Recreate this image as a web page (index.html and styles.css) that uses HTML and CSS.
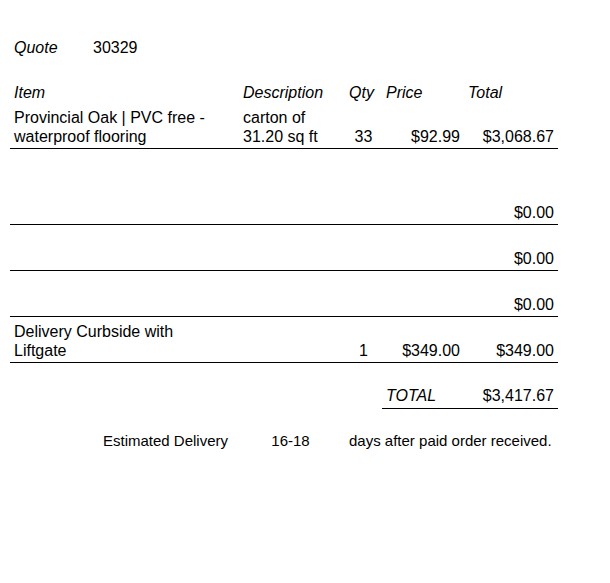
FILE: index.html
```html
<!DOCTYPE html>
<html>
<head>
<meta charset="utf-8">
<link rel="stylesheet" href="styles.css">
</head>
<body>
<div class="sheet">
  <div class="quote-row">
    <span class="quote-label">Quote</span>
    <span class="quote-num">30329</span>
  </div>
  <div class="grid">
    <div class="cell hd">Item</div>
    <div class="cell hd">Description</div>
    <div class="cell hd">Qty</div>
    <div class="cell hd">Price</div>
    <div class="cell hd">Total</div>

    <div class="cell b"><span>Provincial Oak | PVC free -</span><span>waterproof flooring</span></div>
    <div class="cell b"><span>carton of</span><span>31.20 sq ft</span></div>
    <div class="cell b c">33</div>
    <div class="cell b r">$92.99</div>
    <div class="cell b r">$3,068.67</div>

    <div class="cell b"></div>
    <div class="cell b"></div>
    <div class="cell b"></div>
    <div class="cell b"></div>
    <div class="cell b r">$0.00</div>

    <div class="cell b"></div>
    <div class="cell b"></div>
    <div class="cell b"></div>
    <div class="cell b"></div>
    <div class="cell b r">$0.00</div>

    <div class="cell b"></div>
    <div class="cell b"></div>
    <div class="cell b"></div>
    <div class="cell b"></div>
    <div class="cell b r">$0.00</div>

    <div class="cell b"><span>Delivery Curbside with</span><span>Liftgate</span></div>
    <div class="cell b"></div>
    <div class="cell b c">1</div>
    <div class="cell b r">$349.00</div>
    <div class="cell b r">$349.00</div>

    <div class="cell"></div>
    <div class="cell"></div>
    <div class="cell"></div>
    <div class="cell b hd tot">TOTAL</div>
    <div class="cell b r tot">$3,417.67</div>

    <div class="cell r est est-label">Estimated Delivery</div>
    <div class="cell c est est-days">16-18</div>
    <div class="cell est est-text">days after paid order received.</div>
  </div>
</div>
</body>
</html>
```

FILE: styles.css
```css
html, body {
  margin: 0;
  padding: 0;
  background: #ffffff;
}

body {
  font-family: "Liberation Sans", Arial, sans-serif;
  font-size: 16px;
  line-height: 19px;
  color: #000000;
}

.sheet {
  width: 610px;
  height: 583px;
  padding-top: 38px;
  box-sizing: border-box;
}

.quote-row {
  display: flex;
  padding-left: 14px;
  height: 19px;
}

.quote-label {
  font-style: italic;
  width: 79px;
}

.grid {
  display: grid;
  margin-left: 10px;
  width: 548px;
  grid-template-columns: 229px 106px 37px 82px 94px;
  grid-template-rows: 48px 44px 76px 46px 46px 46px 46px 44px;
}

.cell {
  display: flex;
  flex-direction: column;
  justify-content: flex-end;
  padding: 0 4px 2px 4px;
  white-space: nowrap;
  border-bottom: 1px solid transparent;
}

.cell.b {
  border-bottom-color: #000000;
}

.hd {
  font-style: italic;
}

.r {
  align-items: flex-end;
}

.c {
  align-items: center;
}

.tot {
  padding-bottom: 3px;
}

.est {
  font-size: 15px;
}

.est-label {
  padding-right: 11px;
}

.est-days {
  padding-right: 7px;
}

.est-text {
  grid-column: 3 / 6;
}
```
